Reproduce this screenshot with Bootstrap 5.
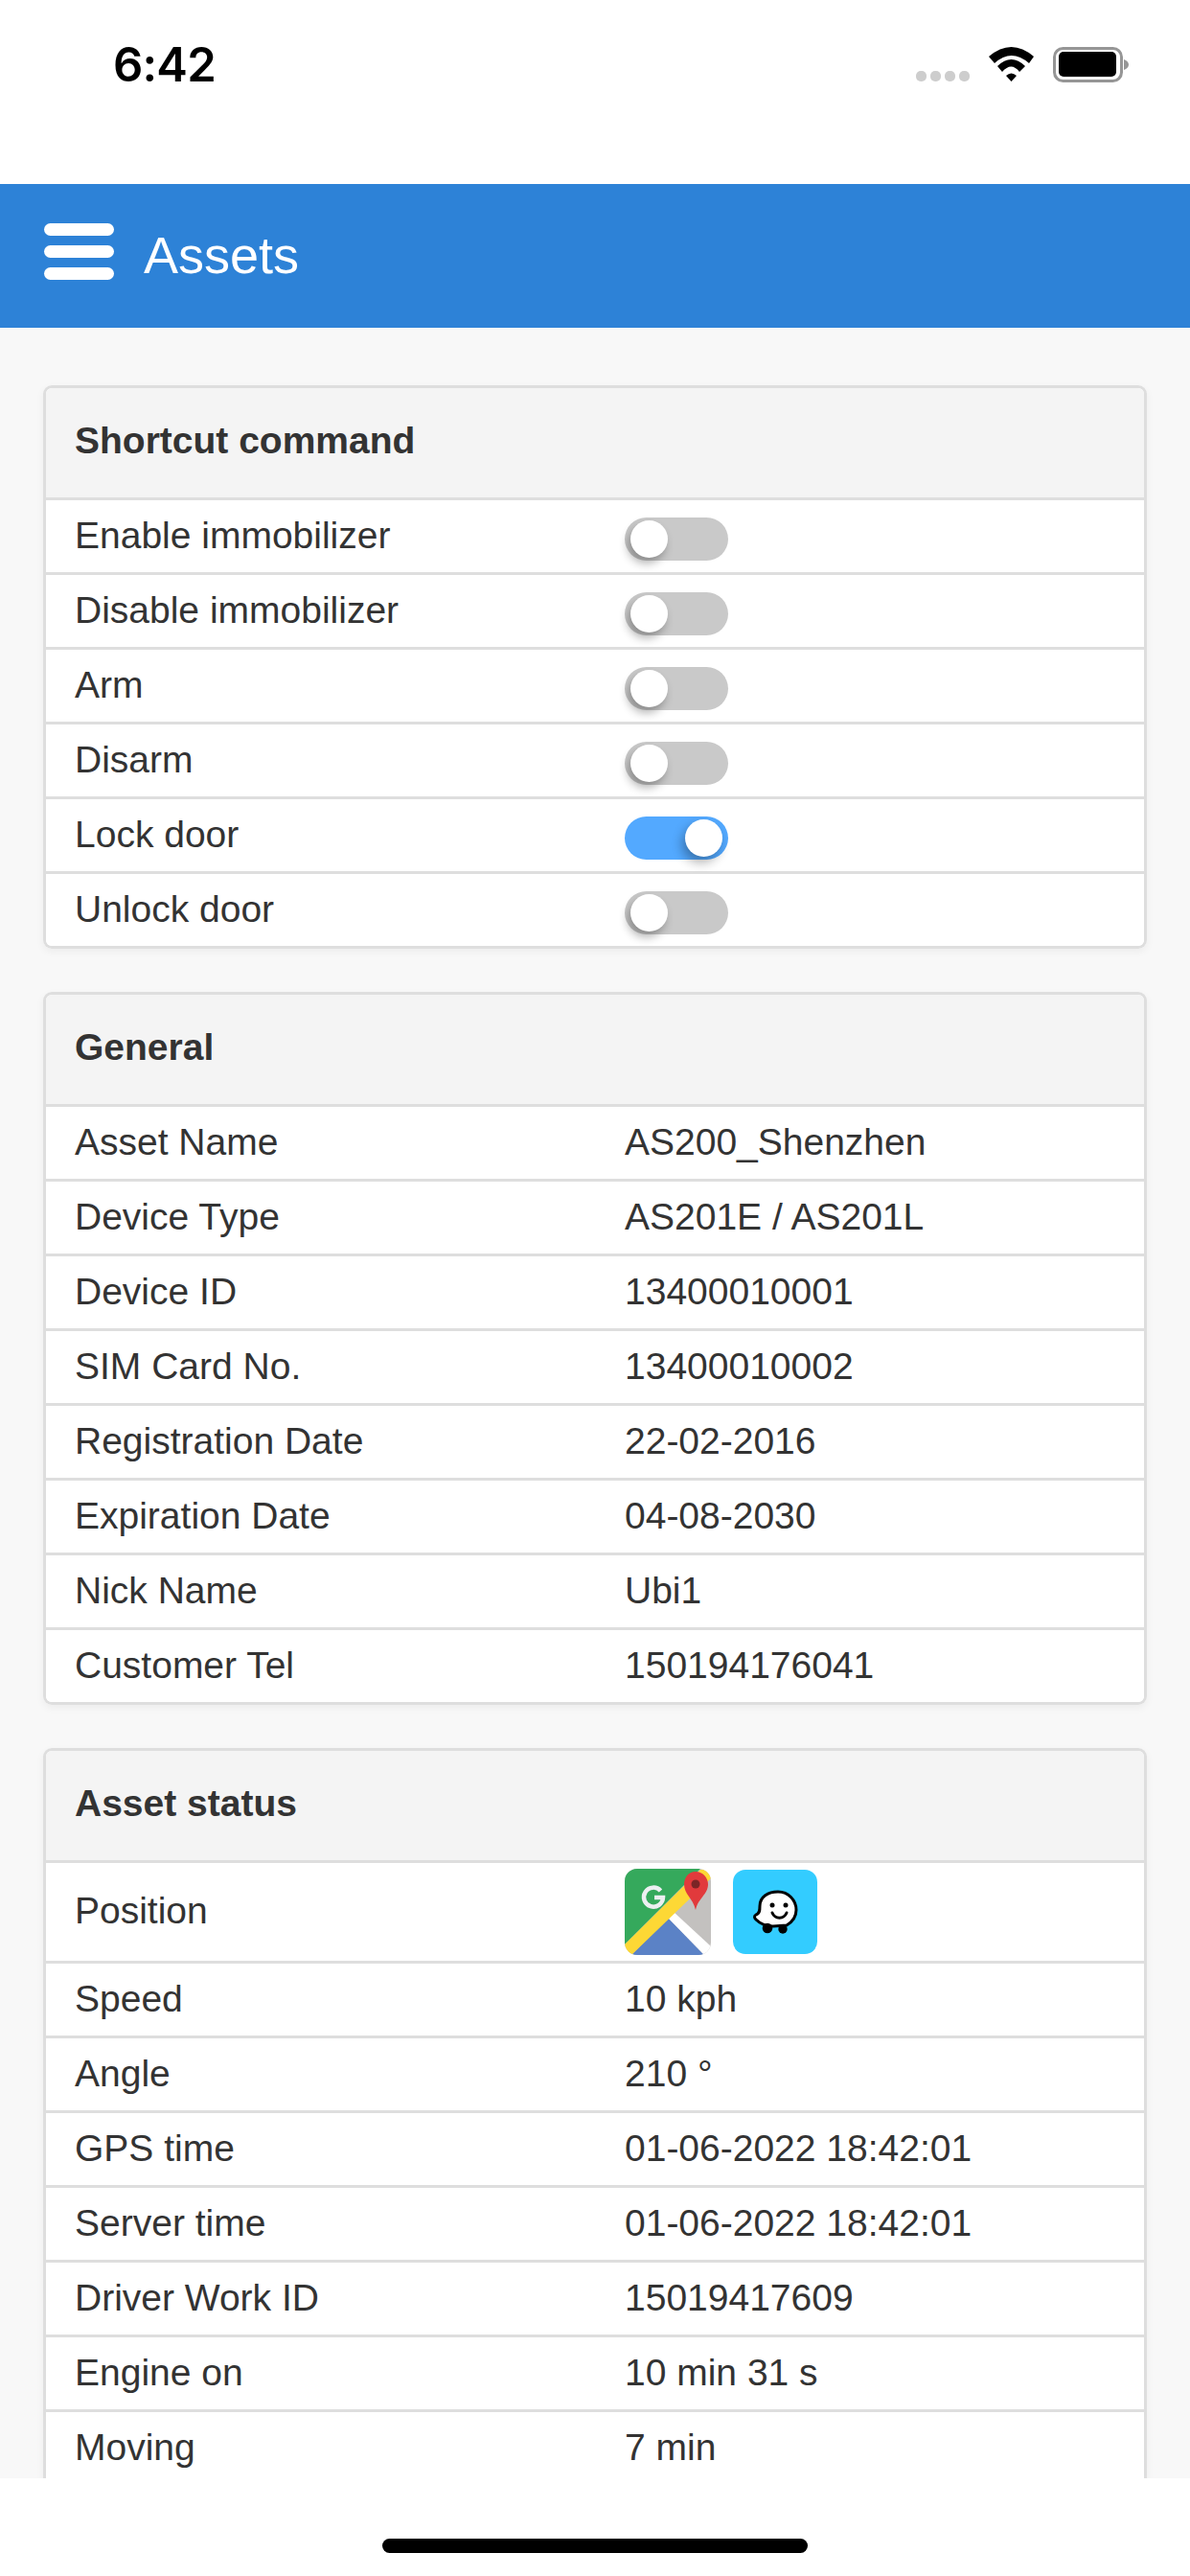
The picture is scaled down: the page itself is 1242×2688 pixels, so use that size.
<!DOCTYPE html>
<html lang="en">
<head>
<meta charset="utf-8">
<title>Assets</title>
<link href="https://cdn.jsdelivr.net/npm/bootstrap@5.3.0/dist/css/bootstrap.min.css" rel="stylesheet">
<style>
html,body{width:1242px;height:2688px;margin:0;overflow:hidden;background:#fff}
body{font-family:"Liberation Sans",Arial,sans-serif;font-size:39px;color:#333}
.phone-shell{height:2688px}
.status-area{height:192px;background:#fff;padding:0 64px 0 118px}
.status-time{font-family:Inter,"Liberation Sans",sans-serif;font-weight:600;font-size:49px;line-height:36px;color:#000;margin-top:50px;letter-spacing:-.8px}
.status-icons{margin-top:49px;height:37px;gap:20px}
.dots{display:flex;gap:4px;padding-top:25px}
.dots span{width:11px;height:11px;border-radius:5px;background:#cdcdcd}
.app-bar{height:150px;background:#2d82d7;padding-left:46px;color:#fff}
.burger{width:73px;display:flex;flex-direction:column;gap:10px;margin-top:-9px}
.burger span{height:13px;border-radius:7px;background:#fff}
.bar-title{font-size:54px;margin-left:31px;margin-top:-3px;line-height:1}
.scroll-zone{flex:1 1 auto;min-height:0;overflow:hidden;background:#f8f8f8;padding:60px 45px 0}
.panel-box{border:0;border-radius:9px;background:#fff;margin-bottom:45px;box-shadow:0 0 0 3px #dedede inset,0 3px 9px rgba(0,0,0,.05);padding:3px;--bs-card-border-width:0}
.panel-box .card-header{height:111px;background:#f4f4f4;border-bottom:3px solid #dedede;box-sizing:content-box;padding:0 0 3px 30px;font-weight:700;font-size:39px;display:flex;align-items:center;border-radius:6px 6px 0 0}
.panel-box .list-group .line-item{display:grid;grid-template-columns:574px 1fr;align-items:center;min-height:78px;padding:0 0 3px 30px;border:0;border-bottom:3px solid #dedede;font-size:39px;line-height:1;color:#333;background:#fff;border-radius:0}
.panel-box .list-group .line-item:last-child{border-bottom:0;min-height:75px;border-radius:0 0 6px 6px}
.panel-box .list-group .tall-item{min-height:105px;padding-bottom:0}
.tall-item>span:first-child{padding-bottom:3px}
.tog{display:block;width:108px;height:45px;border-radius:23px;background:#c9c9c9;position:relative;margin-top:9px}
.tog::after{content:"";position:absolute;left:6px;top:3px;width:39px;height:39px;border-radius:50%;background:#fff;box-shadow:-3px 6px 10px rgba(0,0,0,.3)}
.tog.on{background:#53a9ff}
.tog.on::after{left:63px;box-shadow:-3px 6px 12px rgba(0,0,0,.32)}
.map-icons{display:flex;gap:23px;align-items:center}
.home-area{height:102px;background:#fff;padding-top:63px}
.home-bar{width:444px;height:15px;border-radius:8px;background:#000}
</style>
</head>
<body>
<div class="phone-shell d-flex flex-column">
  <div class="status-area flex-shrink-0 d-flex justify-content-between align-items-start">
    <div class="status-time">6:42</div>
    <div class="status-icons d-flex align-items-start">
      <div class="dots"><span></span><span></span><span></span><span></span></div>
      <svg width="47" height="37" viewBox="0 0 47 37"><path d="M0 10Q23.500-10 47 10L42 17Q23.500 1 6 17Z M9 20Q23.500 6 38 20L32 26Q23.500 15 14 26Z M18 30Q23.500 25 29 30L23.500 36Z" fill="#000"/></svg>
      <svg width="79" height="37" viewBox="0 0 79 37"><rect x="1.500" y="1.500" width="70" height="34" rx="9" fill="none" stroke="#969696" stroke-width="3"/><rect x="6" y="5" width="60" height="26" rx="5" fill="#000"/><path d="M74 13C77 14 79 16 79 18.500C79 21 77 23 74 24Z" fill="#969696"/></svg>
    </div>
  </div>
  <nav class="app-bar flex-shrink-0 d-flex align-items-center">
    <div class="burger"><span></span><span></span><span></span></div>
    <div class="bar-title">Assets</div>
  </nav>
  <main class="scroll-zone">
    <section class="card panel-box">
      <div class="card-header">Shortcut command</div>
      <ul class="list-group list-group-flush">
        <li class="list-group-item line-item"><span>Enable immobilizer</span><span class="tog"></span></li>
        <li class="list-group-item line-item"><span>Disable immobilizer</span><span class="tog"></span></li>
        <li class="list-group-item line-item"><span>Arm</span><span class="tog"></span></li>
        <li class="list-group-item line-item"><span>Disarm</span><span class="tog"></span></li>
        <li class="list-group-item line-item"><span>Lock door</span><span class="tog on"></span></li>
        <li class="list-group-item line-item"><span>Unlock door</span><span class="tog"></span></li>
      </ul>
    </section>
    <section class="card panel-box">
      <div class="card-header">General</div>
      <ul class="list-group list-group-flush">
        <li class="list-group-item line-item"><span>Asset Name</span><span>AS200_Shenzhen</span></li>
        <li class="list-group-item line-item"><span>Device Type</span><span>AS201E / AS201L</span></li>
        <li class="list-group-item line-item"><span>Device ID</span><span>13400010001</span></li>
        <li class="list-group-item line-item"><span>SIM Card No.</span><span>13400010002</span></li>
        <li class="list-group-item line-item"><span>Registration Date</span><span>22-02-2016</span></li>
        <li class="list-group-item line-item"><span>Expiration Date</span><span>04-08-2030</span></li>
        <li class="list-group-item line-item"><span>Nick Name</span><span>Ubi1</span></li>
        <li class="list-group-item line-item"><span>Customer Tel</span><span>150194176041</span></li>
      </ul>
    </section>
    <section class="card panel-box">
      <div class="card-header">Asset status</div>
      <ul class="list-group list-group-flush">
        <li class="list-group-item line-item tall-item"><span>Position</span><span class="map-icons">
          <svg width="90" height="90" viewBox="0 0 90 90"><defs><clipPath id="mc"><rect width="90" height="90" rx="13"/></clipPath></defs><g clip-path="url(#mc)"><rect width="90" height="90" fill="#c3c1bf"/><path d="M0 0H79L0 79Z" fill="#35a95c"/><path d="M45 51L7 90H83Z" fill="#5b82c6"/><path d="M45 51L51 45L90 81V90H83Z" fill="#fff"/><path d="M0 79L79 1H90V10L7 90H0Z" fill="#fdd835"/><path d="M74 3C66 3 62 10 62 16C62 27 71 30 74 43C77 30 87 27 87 16C87 10 82 3 74 3Z" fill="#e13a3c"/><circle cx="74" cy="16" r="4.500" fill="#7b2526"/><path d="M37.500 23A10 10 0 1 0 40 30H31" fill="none" stroke="#eceff1" stroke-width="4.500"/></g></svg>
          <svg width="88" height="88" viewBox="0 0 88 88"><rect width="88" height="88" rx="13" fill="#33ccff"/><path d="M24 47C28 46 28 42 28 38C28 28 37 23 47 23C58 23 66 32 66 42C66 50 61 55 56 58L42 59C34 59 28 56 24 52C22 50 22 48 24 47Z" fill="#fff" stroke="#000" stroke-width="3"/><circle cx="36" cy="61" r="5.300" fill="#000"/><circle cx="52" cy="62" r="4.700" fill="#000"/><circle cx="41" cy="37" r="2.500" fill="#000"/><circle cx="55" cy="37" r="2.500" fill="#000"/><path d="M41 45C44 52 53 52 56 45" fill="none" stroke="#000" stroke-width="3" stroke-linecap="round"/></svg>
        </span></li>
        <li class="list-group-item line-item"><span>Speed</span><span>10 kph</span></li>
        <li class="list-group-item line-item"><span>Angle</span><span>210 °</span></li>
        <li class="list-group-item line-item"><span>GPS time</span><span>01-06-2022 18:42:01</span></li>
        <li class="list-group-item line-item"><span>Server time</span><span>01-06-2022 18:42:01</span></li>
        <li class="list-group-item line-item"><span>Driver Work ID</span><span>15019417609</span></li>
        <li class="list-group-item line-item"><span>Engine on</span><span>10 min 31 s</span></li>
        <li class="list-group-item line-item"><span>Moving</span><span>7 min</span></li>
      </ul>
    </section>
  </main>
  <div class="home-area flex-shrink-0"><div class="home-bar mx-auto"></div></div>
</div>
<script src="https://cdn.jsdelivr.net/npm/bootstrap@5.3.0/dist/js/bootstrap.bundle.min.js"></script>
</body>
</html>
